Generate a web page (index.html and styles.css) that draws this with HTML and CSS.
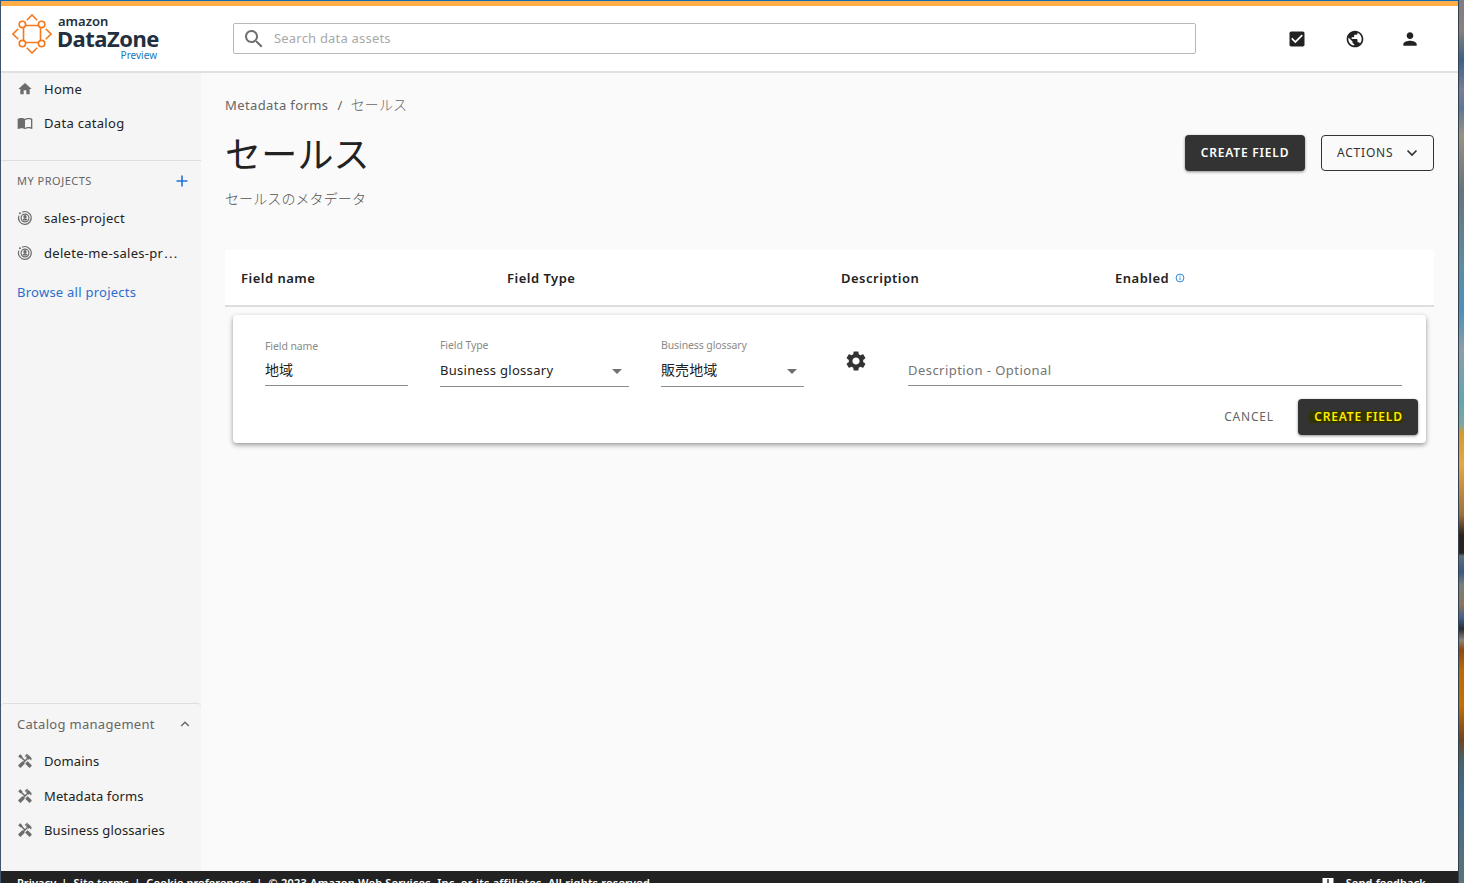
FILE: index.html
```html
<!DOCTYPE html>
<html lang="ja">
<head>
  <meta charset="UTF-8" />
  <meta name="viewport" content="width=device-width, initial-scale=1.0"/>
  <title>Amazon DataZone</title>
  <link rel="stylesheet" href="styles.css">
</head>
<body>
  <div class="window">
    <header class="header">
      <a class="logo" href="#">
        <svg class="logo-mark" width="40" height="40" viewBox="0 0 40 40" fill="none" stroke="#f37a1f" stroke-width="1.6">
          <path d="M14 11.5h12M14 28.5h12M11.5 14v12M28.5 14v12"/>
          <path d="M14.8 6.3 20 1l5.2 5.3M14.8 33.7 20 39l5.2-5.3M6.3 14.8 1 20l5.3 5.2M33.7 14.8 39 20l-5.3 5.2"/>
          <circle cx="10.4" cy="10.4" r="3.2"/>
          <circle cx="29.6" cy="10.4" r="3.2"/>
          <circle cx="10.4" cy="29.6" r="3.2"/>
          <circle cx="29.6" cy="29.6" r="3.2"/>
        </svg>
        <span class="logo-text">
          <span class="logo-amazon">amazon</span>
          <span class="logo-name">DataZone</span>
          <span class="logo-preview">Preview</span>
        </span>
      </a>
      <div class="search">
        <svg width="24" height="24" viewBox="0 0 24 24" fill="#707070"><path d="M15.5 14h-.79l-.28-.27C15.41 12.59 16 11.11 16 9.5 16 5.91 13.09 3 9.5 3S3 5.91 3 9.5 5.91 16 9.5 16c1.61 0 3.09-.59 4.23-1.57l.27.28v.79l5 4.99L20.49 19l-4.99-5zm-6 0C7.01 14 5 11.99 5 9.5S7.01 5 9.5 5 14 7.01 14 9.5 11.99 14 9.5 14z"/></svg>
        <input type="text" placeholder="Search data assets">
      </div>
      <nav class="header-icons">
        <svg class="icon-tasks" width="20" height="20" viewBox="0 0 24 24"><path d="M19 3H5c-1.11 0-2 .9-2 2v14c0 1.1.89 2 2 2h14c1.11 0 2-.9 2-2V5c0-1.1-.89-2-2-2zm-9 14l-5-5 1.41-1.41L10 14.17l7.59-7.59L19 8l-9 9z"/></svg>
        <svg width="20" height="20" viewBox="0 0 24 24"><path d="M12 2C6.48 2 2 6.48 2 12s4.48 10 10 10 10-4.48 10-10S17.52 2 12 2zm-1 17.93c-3.95-.49-7-3.85-7-7.93 0-.62.08-1.21.21-1.79L9 15v1c0 1.1.9 2 2 2v1.93zm6.9-2.54c-.26-.81-1-1.39-1.9-1.39h-1v-3c0-.55-.45-1-1-1H8v-2h2c.55 0 1-.45 1-1V7h2c1.1 0 2-.9 2-2v-.41c2.93 1.19 5 4.06 5 7.41 0 2.08-.8 3.97-2.1 5.39z"/></svg>
        <svg class="icon-user" width="20" height="20" viewBox="0 0 24 24"><path d="M12 12c2.21 0 4-1.79 4-4s-1.79-4-4-4-4 1.79-4 4 1.79 4 4 4zm0 2c-2.67 0-8 1.34-8 4v2h16v-2c0-2.66-5.33-4-8-4z"/></svg>
      </nav>
    </header>

    <div class="body">
      <aside class="sidebar">
        <ul class="nav nav-main">
          <li>
            <svg width="16" height="16" viewBox="0 0 24 24"><path d="M10 20v-6h4v6h5v-8h3L12 3 2 12h3v8z"/></svg>
            <span>Home</span>
          </li>
          <li>
            <svg width="16" height="16" viewBox="0 0 24 24"><path d="M21 5c-1.11-.35-2.33-.5-3.5-.5-1.95 0-4.05.4-5.5 1.5-1.45-1.1-3.55-1.5-5.5-1.5S2.45 4.9 1 6v14.65c0 .25.25.5.5.5.1 0 .15-.05.25-.05C3.1 20.45 5.05 20 6.5 20c1.95 0 4.05.4 5.5 1.5 1.35-.85 3.8-1.5 5.5-1.5 1.65 0 3.35.3 4.75 1.05.1.05.15.05.25.05.25 0 .5-.25.5-.5V6c-.6-.45-1.25-.75-2-1zm0 13.5c-1.1-.35-2.3-.5-3.5-.5-1.7 0-4.15.65-5.5 1.5V8c1.35-.85 3.8-1.5 5.5-1.5 1.2 0 2.4.15 3.5.5v11.5z"/></svg>
            <span>Data catalog</span>
          </li>
        </ul>

        <div class="projects">
          <div class="projects-title">
            <span>MY PROJECTS</span>
            <svg width="12" height="12" viewBox="0 0 12 12" fill="none" stroke="#2074d5" stroke-width="1.6"><path d="M6 .5v11M.5 6h11"/></svg>
          </div>
          <ul class="nav nav-projects">
            <li>
              <svg width="16" height="16" viewBox="0 0 16 16"><use href="#project"/></svg>
              <span>sales-project</span>
            </li>
            <li>
              <svg width="16" height="16" viewBox="0 0 16 16"><use href="#project"/></svg>
              <span>delete-me-sales-pr<span class="ellipsis">…</span></span>
            </li>
          </ul>
          <a class="browse" href="#">Browse all projects</a>
        </div>

        <div class="catalog">
          <div class="catalog-title">
            <span>Catalog management</span>
            <svg width="10" height="6" viewBox="0 0 10 6" fill="none" stroke="#666" stroke-width="1.4"><path d="M1.2 5 5 1.2 8.8 5"/></svg>
          </div>
          <ul class="nav nav-catalog">
            <li>
              <svg width="16" height="16" viewBox="0 0 24 24"><use href="#tools"/></svg>
              <span>Domains</span>
            </li>
            <li>
              <svg width="16" height="16" viewBox="0 0 24 24"><use href="#tools"/></svg>
              <span>Metadata forms</span>
            </li>
            <li>
              <svg width="16" height="16" viewBox="0 0 24 24"><use href="#tools"/></svg>
              <span>Business glossaries</span>
            </li>
          </ul>
        </div>
      </aside>

      <main class="main">
        <div class="breadcrumb">
          <a href="#">Metadata forms</a>
          <span class="slash">/</span>
          <span class="jp">セールス</span>
        </div>

        <div class="title-row">
          <h1>セールス</h1>
          <div class="title-actions">
            <button class="btn btn-dark">CREATE FIELD</button>
            <button class="btn btn-outline">
              <span>ACTIONS</span>
              <svg width="12" height="8" viewBox="0 0 12 8" fill="none" stroke="#333" stroke-width="1.7"><path d="M1.5 1.5 6 6l4.5-4.5"/></svg>
            </button>
          </div>
        </div>
        <p class="subtitle jp">セールスのメタデータ</p>

        <div class="table-head">
          <span>Field name</span>
          <span>Field Type</span>
          <span>Description</span>
          <span class="enabled">Enabled
            <svg width="10" height="10" viewBox="0 0 10 10" fill="none" stroke="#2b86dc"><circle cx="5" cy="5" r="3.9"/><path d="M5 4.4v2.8M5 2.7v1" stroke-width=".9"/></svg>
          </span>
        </div>

        <div class="card">
          <div class="fields">
            <div class="field">
              <label>Field name</label>
              <div class="value jp">地域</div>
            </div>
            <div class="field select">
              <label>Field Type</label>
              <div class="value"><span>Business glossary</span><i class="caret"></i></div>
            </div>
            <div class="field select">
              <label>Business glossary</label>
              <div class="value jp"><span>販売地域</span><i class="caret"></i></div>
            </div>
            <svg class="gear" width="24" height="24" viewBox="0 0 24 24"><path d="M19.14 12.94c.04-.3.06-.61.06-.94 0-.32-.02-.64-.07-.94l2.03-1.58c.18-.14.23-.41.12-.61l-1.92-3.32c-.12-.22-.37-.29-.59-.22l-2.39.96c-.5-.38-1.03-.7-1.62-.94l-.36-2.54c-.04-.24-.24-.41-.48-.41h-3.84c-.24 0-.43.17-.47.41l-.36 2.54c-.59.24-1.13.57-1.62.94l-2.39-.96c-.22-.08-.47 0-.59.22L2.74 8.87c-.12.21-.08.47.12.61l2.03 1.58c-.05.3-.09.63-.09.94s.02.64.07.94l-2.03 1.58c-.18.14-.23.41-.12.61l1.92 3.32c.12.22.37.29.59.22l2.39-.96c.5.38 1.03.7 1.62.94l.36 2.54c.05.24.24.41.48.41h3.84c.24 0 .44-.17.47-.41l.36-2.54c.59-.24 1.13-.56 1.62-.94l2.39.96c.22.08.47 0 .59-.22l1.92-3.32c.12-.22.07-.47-.12-.61l-2.01-1.58zM12 15.6c-1.98 0-3.6-1.62-3.6-3.6s1.62-3.6 3.6-3.6 3.6 1.62 3.6 3.6-1.62 3.6-3.6 3.6z"/></svg>
            <div class="field description">
              <div class="value">Description - Optional</div>
            </div>
          </div>
          <div class="card-actions">
            <button class="btn btn-text">CANCEL</button>
            <button class="btn btn-dark"><mark>CREATE FIELD</mark></button>
          </div>
        </div>
      </main>
    </div>

    <footer class="footer">
      <div class="footer-links">
        <span>Privacy</span><i>|</i><span>Site terms</span><i>|</i><span>Cookie preferences</span><i>|</i><span class="copyright">© 2023 Amazon Web Services, Inc. or its affiliates. All rights reserved.</span>
      </div>
      <div class="feedback">
        <svg width="12" height="12" viewBox="0 0 12 12"><path fill="#fff" d="M.5 1h11v9H3L.5 12z"/><path fill="#222" d="M5.3 2h1.4v4H5.3zM5.3 7h1.4v1.4H5.3z"/></svg>
        <span>Send feedback</span>
      </div>
    </footer>
  </div>
  <div class="desktop"></div>

  <svg width="0" height="0" class="defs">
    <symbol id="project" viewBox="0 0 16 16">
      <g fill="none" stroke="#6c6c6c" stroke-width="1.2">
        <path d="M5 2.2a6.4 6.4 0 1 1-3.1 3.4"/>
        <circle cx="8" cy="8" r="3.9"/>
      </g>
      <circle cx="3" cy="3.2" r="1" fill="#6c6c6c"/>
      <circle cx="8" cy="6.8" r="1.7" fill="#6c6c6c"/>
      <path d="M5.4 10.6c.3-3 4.900-3 5.200 0z" fill="#6c6c6c"/>
    </symbol>
    <symbol id="tools" viewBox="0 0 24 24">
      <g stroke="#6c6c6c" stroke-width=".3">
        <path d="M21.67 18.17l-5.3-5.3h-.99l-2.54 2.54v.99l5.3 5.3c.39.39 1.02.39 1.41 0l2.12-2.12c.39-.38.39-1.02 0-1.41z"/>
        <path d="M17.34 10.19l1.41-1.41 2.12 2.12c1.17-1.17 1.17-3.07 0-4.24l-3.54-3.54-1.41 1.41V1.71L15.22 1l-3.54 3.54.71.71h2.83l-1.41 1.41 1.06 1.06-2.89 2.89-4.13-4.13V5.06L4.83 2.04 2 4.87 5.03 7.9h1.41l4.13 4.13-.85.85H7.6l-5.3 5.3c-.39.39-.39 1.02 0 1.41l2.12 2.12c.39.39 1.02.39 1.41 0l5.3-5.3v-2.12l5.15-5.15 1.06 1.05z"/>
      </g>
    </symbol>
  </svg>
</body>
</html>
```

FILE: styles.css
```css
* {
  box-sizing: border-box;
}
body {
  margin: 0;
  height: 883px;
  display: flex;
  overflow: hidden;
  font-family: "Noto Sans", "Noto Sans CJK JP", sans-serif;
  font-size: 13px;
  line-height: 20px;
  letter-spacing: 0.3px;
  color: #222;
}
ul {
  list-style: none;
  margin: 0;
  padding: 0;
}
a {
  color: inherit;
  text-decoration: none;
}
svg {
  display: block;
  flex: none;
}
.defs {
  display: none;
}
.jp {
  font-size: 14px;
  font-weight: 300;
  letter-spacing: 0.1px;
}
.window {
  width: 1459px;
  height: 883px;
  display: flex;
  flex-direction: column;
  border-top: 1px solid #0a6ebd;
  border-left: 1px solid #3f5468;
  border-right: 1px solid #33424c;
  background: #fafafa;
}
.desktop {
  flex: 1;
  background: linear-gradient(#7d7d85, #8b7f80 30px, #3c6288 60px, #7a7d95 90px, #5b7897 108px, #9a9182 135px, #68747a 190px, #5d8ca0 265px, #4d90b8 310px, #8d9dab 350px, #64a5ad 400px, #7fa6a0 425px, #d6982f 433px, #e5a745 465px, #9a7040 515px, #2c231c 535px, #29221d 553px, #60717c 556px, #3a5a80 572px, #77807b 585px, #8b7360 605px, #405f91 618px, #2a2e2e 629px, #8a8478 640px, #8f4813 650px, #b96a08 670px, #c27107 705px, #70441f 740px, #48626a 760px, #416b8b 795px, #5c7378 883px);
}

/* header */
.header {
  height: 72px;
  flex: none;
  display: flex;
  align-items: center;
  padding: 0 38px 0 11px;
  background: #fff;
  border-top: 5px solid #ffad47;
  border-bottom: 2px solid #e0e0e0;
}
.logo {
  width: 221px;
  height: 49px;
  display: flex;
  align-items: flex-start;
  gap: 5px;
}
.logo-text {
  width: 102px;
  display: flex;
  flex-direction: column;
  color: #232f3e;
  font-weight: 700;
  letter-spacing: 0;
}
.logo-amazon {
  font-size: 13px;
  font-weight: 600;
  line-height: 14px;
  padding-left: 1px;
}
.logo-name {
  font-size: 22px;
  line-height: 21px;
  letter-spacing: -0.5px;
}
.logo-preview {
  align-self: flex-end;
  margin-right: 2px;
  font-size: 10px;
  font-weight: 400;
  line-height: 12px;
  color: #1779ba;
}
.search {
  width: 963px;
  height: 31px;
  display: flex;
  align-items: center;
  gap: 8px;
  padding-left: 8px;
  border: 1px solid #b8b8b8;
  border-radius: 2px;
}
.search input {
  flex: 1;
  padding: 0 0 2px;
  border: 0;
  outline: none;
  background: none;
  font: inherit;
  letter-spacing: 0.2px;
}
.search input::placeholder {
  color: #a9a9a9;
}
.header-icons {
  margin-left: auto;
  display: flex;
  gap: 35px;
  padding-top: 1px;
  fill: #222;
}
.header-icons .icon-tasks {
  margin-right: 3px;
}

/* sidebar */
.body {
  flex: 1;
  display: flex;
  min-height: 0;
}
.sidebar {
  width: 200px;
  display: flex;
  flex-direction: column;
  background: #f5f5f5;
}
.nav {
  display: flex;
  flex-direction: column;
  fill: #6c6c6c;
}
.nav li {
  display: flex;
  align-items: center;
  gap: 11px;
  padding-left: 16px;
  height: 20px;
}
.nav-main {
  gap: 14px;
  height: 88px;
  padding-top: 6px;
  border-bottom: 1px solid #dedede;
}
.projects-title {
  display: flex;
  align-items: center;
  justify-content: space-between;
  margin: 10px 13px 17px 16px;
  font-size: 11px;
  letter-spacing: 0.5px;
  color: #666;
}
.nav-projects {
  gap: 15px;
}
.ellipsis {
  font-family: "Liberation Sans", sans-serif;
  font-size: 15px;
}
.browse {
  display: block;
  margin: 19px 16px 0;
  letter-spacing: 0.25px;
  color: #2a6fd0;
}
.catalog {
  margin-top: auto;
  height: 168px;
  border-top: 1px solid #dedede;
  border-radius: 4px;
}
.catalog-title {
  display: flex;
  align-items: center;
  justify-content: space-between;
  margin: 10px 11px 17px 16px;
  color: #666;
}
.nav-catalog {
  gap: 14.5px;
  letter-spacing: 0.12px;
}

/* main */
.main {
  flex: 1;
  padding: 22px 24px 0;
}
.breadcrumb {
  display: flex;
  letter-spacing: 0.4px;
  color: #666;
}
.slash {
  margin: 0 8px 0 9px;
}
.title-row {
  display: flex;
  justify-content: space-between;
  align-items: center;
  margin-top: 18px;
  height: 40px;
}
h1 {
  margin: 0;
  padding-top: 4px;
  font-size: 36px;
  font-weight: 400;
  line-height: 40px;
  letter-spacing: 0.2px;
}
.title-actions {
  display: flex;
  gap: 16px;
}
.subtitle {
  margin: 16px 0 0;
  color: #555;
}
.btn {
  height: 36px;
  border: 0;
  border-radius: 4px;
  padding: 0;
  font: inherit;
  font-size: 12px;
  letter-spacing: 0.8px;
}
.btn-dark {
  width: 120px;
  background: #333;
  color: #fff;
  font-weight: 600;
  box-shadow: 0 1px 3px rgba(0,0,0,0.45);
}
.btn-outline {
  width: 113px;
  display: flex;
  align-items: center;
  justify-content: space-between;
  padding: 0 15px;
  border: 1px solid #333;
  background: none;
  color: #333;
}
.btn-text {
  width: 50px;
  background: none;
  color: #666;
}
mark {
  padding: 0 0 0 5px;
  margin-left: -4px;
  line-height: 12px;
  background: linear-gradient(#333300, #333300) center / 100% 12px no-repeat;
  color: #ffea00;
}
.table-head {
  display: grid;
  grid-template-columns: 266px 334px 274px 1fr;
  align-items: center;
  margin-top: 41px;
  height: 57px;
  padding-left: 16px;
  background: #fff;
  border-bottom: 2px solid #dedede;
  font-weight: 600;
  letter-spacing: 0.5px;
}
.enabled {
  display: flex;
  align-items: center;
  gap: 6px;
}

/* new field form */
.card {
  margin: 8px 8px 0;
  height: 128px;
  padding: 22px 8px 8px 32px;
  background: #fff;
  border-radius: 4px;
  box-shadow: 0 2px 5px rgba(0,0,0,0.4);
}
.fields {
  display: grid;
  grid-template-columns: 143px 189px 143px 24px 510px;
  column-gap: 32px;
  height: 62px;
  align-items: start;
}
.field label {
  display: block;
  height: 18px;
  font-size: 10.5px;
  font-weight: 400;
  line-height: 18px;
  letter-spacing: -0.1px;
  color: #8a8a8a;
}
.select label {
  line-height: 16px;
}
.field .value {
  height: 31px;
  display: flex;
  justify-content: space-between;
  font-weight: 400;
  line-height: 30px;
  border-bottom: 1px solid #8c8c8c;
}
.select .value {
  height: 32px;
}
.caret {
  margin: 14px 7px 0 0;
  width: 0;
  height: 0;
  border: 5px solid transparent;
  border-top-color: #707070;
  border-bottom: 0;
}
.gear {
  margin: 12px 0 0 8px;
  fill: #333;
}
.description {
  margin: 18px 0 0 16px;
  letter-spacing: 0.45px;
  color: #757575;
}
.card-actions {
  display: flex;
  justify-content: flex-end;
  gap: 24px;
}

/* footer */
.footer {
  height: 12px;
  flex: none;
  display: flex;
  justify-content: space-between;
  padding: 2px 32px 0 16px;
  overflow: hidden;
  background: #222;
  color: #fff;
  font-size: 11px;
  font-weight: 600;
  letter-spacing: 0.15px;
}
.footer i {
  margin: 0 6px 0 5px;
  font-style: normal;
}
.footer-links {
  letter-spacing: 0.1px;
}
.copyright {
  letter-spacing: 0.22px;
}
.feedback {
  display: flex;
  gap: 12px;
}
.feedback svg {
  margin-top: 4px;
}
```
